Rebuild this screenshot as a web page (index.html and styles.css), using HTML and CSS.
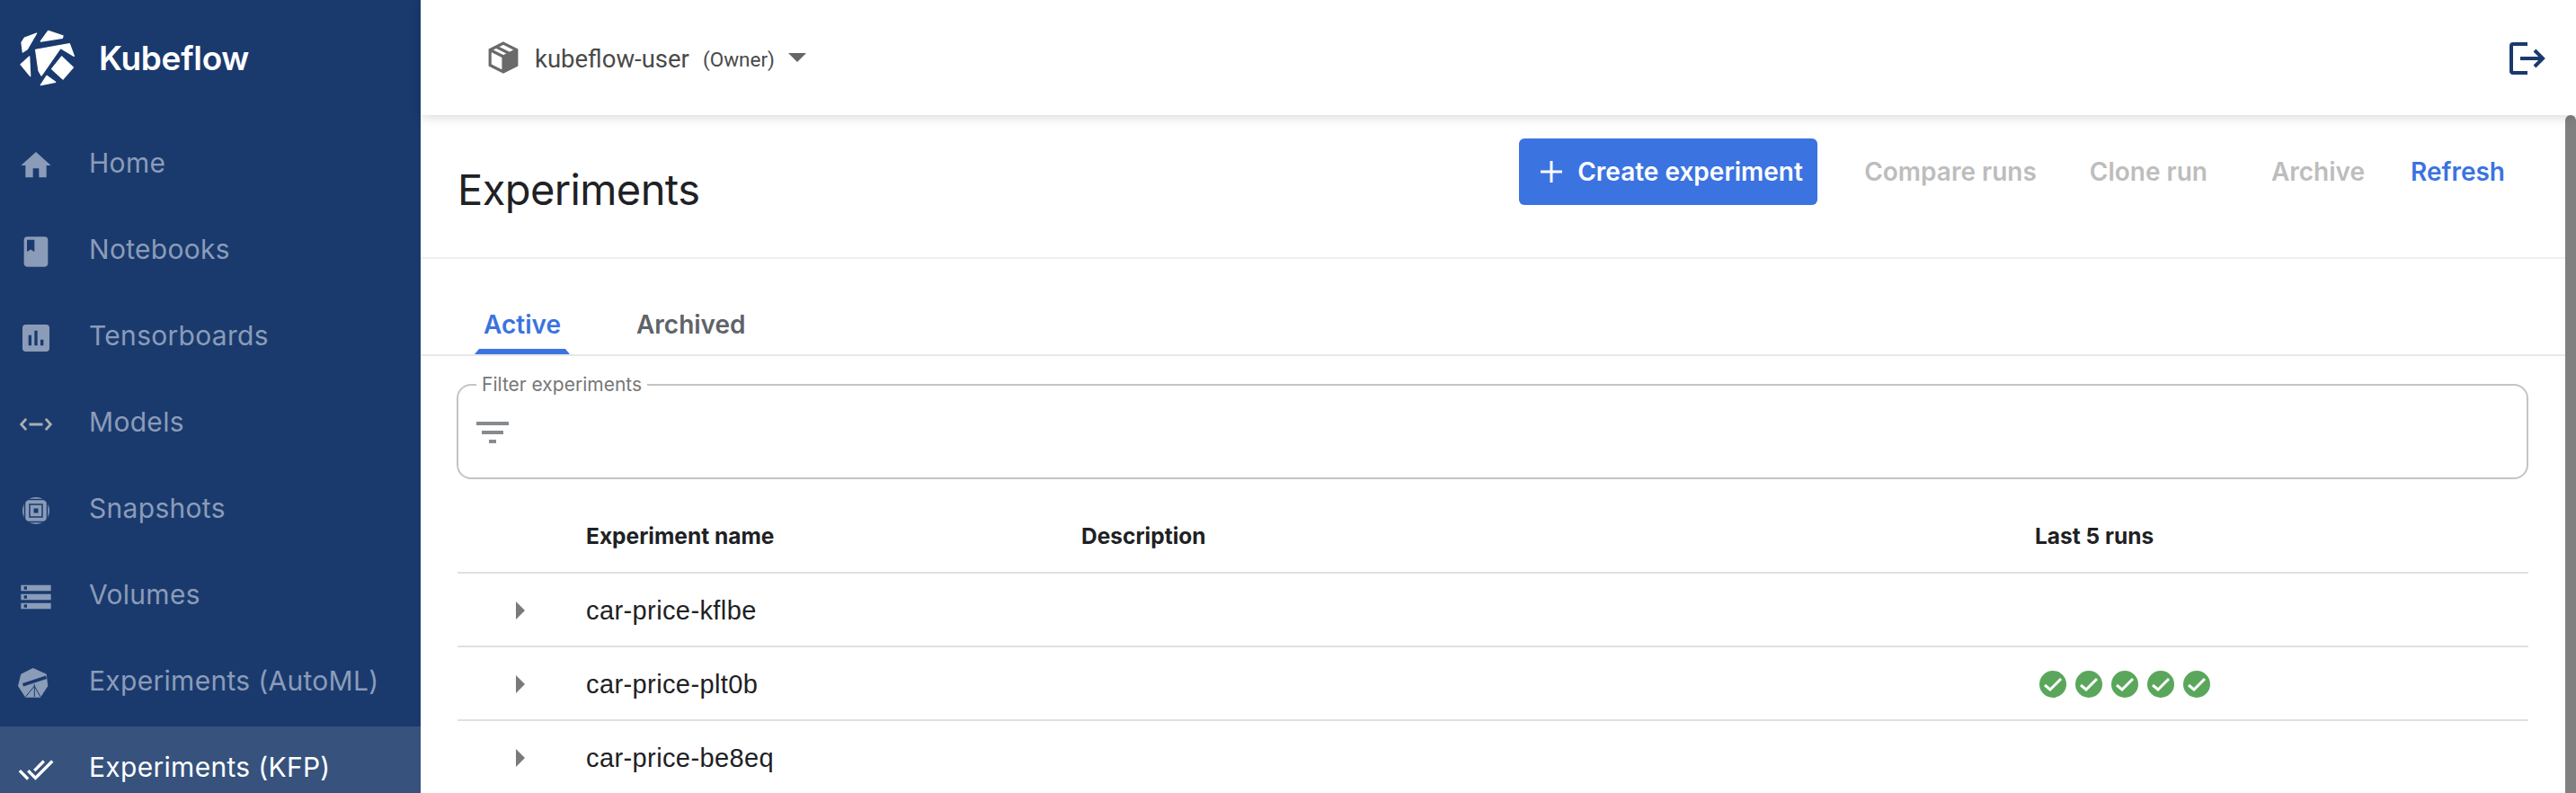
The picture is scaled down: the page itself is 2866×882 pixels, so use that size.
FILE: index.html
```html
<!DOCTYPE html>
<html lang="en">
<head>
    <meta charset="UTF-8">
    <title>Kubeflow - Experiments</title>
    <link rel="stylesheet" href="styles.css">
</head>
<body>
    <aside class="sidebar">
        <div class="brand">
            <svg class="brand-logo" viewBox="0 0 240 270">
                <path d="M42 82 52 66 92 51 61 104 46 114z"/>
                <path d="M106 78 131 43 180 60 178 67z"/>
                <path d="M89 106 202 86 217 127 172 100 108 192 99 176z"/>
                <path d="M176 129 214 165 180 204 143 170z"/>
                <path d="M68 129 71 194 39 155z"/>
                <path d="M126 193 155 214 106 224z"/>
            </svg>
            <span class="brand-name">Kubeflow</span>
        </div>
        <nav class="nav">
            <a class="nav-item">
                <svg class="nav-icon" viewBox="0 0 24 24"><path d="M10 20v-6h4v6h5v-8h3L12 3 2 12h3v8z"/></svg>
                <span>Home</span>
            </a>
            <a class="nav-item">
                <svg class="nav-icon" viewBox="0 0 24 24"><path d="M18 2H6c-1.100 0-2 .9-2 2v16c0 1.100.9 2 2 2h12c1.100 0 2-.9 2-2V4c0-1.100-.9-2-2-2zM6 4h5v8l-2.500-1.500L6 12V4z"/></svg>
                <span>Notebooks</span>
            </a>
            <a class="nav-item">
                <svg class="nav-icon" viewBox="0 0 24 24"><path d="M19 3H5c-1.100 0-2 .9-2 2v14c0 1.100.9 2 2 2h14c1.100 0 2-.9 2-2V5c0-1.100-.9-2-2-2zM9 17H7v-7h2v7zm4 0h-2V7h2v10zm4 0h-2v-4h2v4z"/></svg>
                <span>Tensorboards</span>
            </a>
            <a class="nav-item">
                <svg class="nav-icon icon-models" viewBox="0 0 24 24"><path d="M5.500 8.300 2.200 12l3.300 3.700M18.500 8.300l3.300 3.700-3.300 3.700M7.500 12h9"/></svg>
                <span>Models</span>
            </a>
            <a class="nav-item">
                <svg class="nav-icon icon-snapshots" viewBox="0 0 40 40">
                    <circle cx="20" cy="20" r="15"/>
                    <rect class="ring" x="7.500" y="7.500" width="25" height="25"/>
                    <rect class="ring" x="13" y="13" width="14" height="14"/>
                    <rect class="core" x="17.500" y="17.500" width="5" height="5"/>
                </svg>
                <span>Snapshots</span>
            </a>
            <a class="nav-item">
                <svg class="nav-icon" viewBox="0 0 24 24"><path d="M2 20h20v-4H2v4zm2-3h2v2H4v-2zM2 4v4h20V4H2zm4 3H4V5h2v2zm-4 7h20v-4H2v4zm2-3h2v2H4v-2z"/></svg>
                <span>Volumes</span>
            </a>
            <a class="nav-item">
                <svg class="nav-icon icon-katib" viewBox="0 0 40 40">
                    <path d="M16.700 3 31.700 9.700 33.300 23 25 35.700H8.300L0 23 3.300 9.700z"/>
                    <path class="scope" d="M5 20 31 11.500 32 15 6 23.500z"/>
                    <path class="scope-legs" d="M18.300 21V35M18.300 23 8.500 35M18.300 23 25 35"/>
                </svg>
                <span>Experiments (AutoML)</span>
            </a>
            <a class="nav-item active">
                <svg class="nav-icon icon-done" viewBox="0 0 24 24"><path d="M18 7l-1.410-1.410-6.340 6.340 1.410 1.410L18 7zm4.240-1.410L11.660 16.170 7.480 12l-1.410 1.410L11.660 19l12-12-1.420-1.410zM.41 13.410L6 19l1.410-1.410L1.830 12 .41 13.410z"/></svg>
                <span>Experiments (KFP)</span>
            </a>
        </nav>
    </aside>

    <div class="main">
        <header class="topbar">
            <div class="namespace">
                <svg class="box-icon" viewBox="0 0 32 34">
                    <path fill="none" stroke="#6a6a6a" stroke-width="3" d="M16 2 30 9v16l-14 7-14-7V9zM2 9l14 7 14-7M16 16v16"/>
                    <path fill="#6a6a6a" d="M16 16l14-7v16l-14 7z"/>
                    <path fill="none" stroke="#6a6a6a" stroke-width="3" d="M9 6l13 6.500"/>
                </svg>
                <span class="namespace-name">kubeflow-user</span>
                <span class="namespace-role">(Owner)</span>
                <span class="caret"></span>
            </div>
            <svg class="logout" viewBox="0 0 40 36"><path d="M20 2H4a2 2 0 0 0-2 2v28a2 2 0 0 0 2 2h16M12 18h25M28 9l9 9-9 9"/></svg>
        </header>

        <div class="content">
            <div class="scrollbar"></div>

            <div class="page-head">
                <h1>Experiments</h1>
                <div class="actions">
                    <button class="btn-primary">
                        <svg class="plus" viewBox="0 0 24 24"><path d="M12 0v24M0 12h24"/></svg>
                        Create experiment
                    </button>
                    <button class="btn-text compare">Compare runs</button>
                    <button class="btn-text clone">Clone run</button>
                    <button class="btn-text archive">Archive</button>
                    <button class="btn-text refresh">Refresh</button>
                </div>
            </div>

            <div class="tabs">
                <div class="tab active">Active</div>
                <div class="tab">Archived</div>
            </div>

            <fieldset class="filter">
                <legend>Filter experiments</legend>
                <svg class="filter-icon" viewBox="0 0 36 24"><path d="M0 0h36v4H0zM6 10h24v4H6zM14 20h8v4h-8z"/></svg>
            </fieldset>

            <div class="table">
                <div class="row head">
                    <div class="cell-toggle"></div>
                    <div class="cell-name">Experiment name</div>
                    <div class="cell-desc">Description</div>
                    <div class="cell-runs">Last 5 runs</div>
                </div>
                <div class="row">
                    <div class="cell-toggle"><span class="arrow"></span></div>
                    <div class="cell-name">car-price-kflbe</div>
                    <div class="cell-desc"></div>
                    <div class="cell-runs"></div>
                </div>
                <div class="row">
                    <div class="cell-toggle"><span class="arrow"></span></div>
                    <div class="cell-name">car-price-plt0b</div>
                    <div class="cell-desc"></div>
                    <div class="cell-runs statuses">
                        <svg class="check" viewBox="0 0 30 30"><circle cx="15" cy="15" r="15"/><path d="M6 16l6 5 12-12"/></svg>
                        <svg class="check" viewBox="0 0 30 30"><circle cx="15" cy="15" r="15"/><path d="M6 16l6 5 12-12"/></svg>
                        <svg class="check" viewBox="0 0 30 30"><circle cx="15" cy="15" r="15"/><path d="M6 16l6 5 12-12"/></svg>
                        <svg class="check" viewBox="0 0 30 30"><circle cx="15" cy="15" r="15"/><path d="M6 16l6 5 12-12"/></svg>
                        <svg class="check" viewBox="0 0 30 30"><circle cx="15" cy="15" r="15"/><path d="M6 16l6 5 12-12"/></svg>
                    </div>
                </div>
                <div class="row">
                    <div class="cell-toggle"><span class="arrow"></span></div>
                    <div class="cell-name">car-price-be8eq</div>
                    <div class="cell-desc"></div>
                    <div class="cell-runs"></div>
                </div>
            </div>
        </div>
    </div>
</body>
</html>
```

FILE: styles.css
```css
html, body {
    margin: 0;
    height: 882px;
    overflow: hidden;
}
body {
    display: flex;
    font-family: Inter, "Noto Sans", sans-serif;
    background: #fff;
    color: #202124;
}

/* sidebar */
.sidebar {
    width: 468px;
    flex: none;
    background: #1a3a6e;
    overflow: hidden;
}
.brand {
    height: 128px;
    display: flex;
    align-items: center;
    padding-left: 10px;
    gap: 20px;
    box-sizing: border-box;
}
.brand-logo {
    width: 80px;
    height: 90px;
    margin-top: 2px;
    fill: #fff;
    stroke: #fff;
    stroke-width: 4;
    stroke-linejoin: round;
}
.brand-name {
    color: #fff;
    font-size: 37px;
    font-weight: 600;
    letter-spacing: -0.3px;
}
.nav {
    margin-top: 8px;
}
.nav-item {
    height: 96px;
    display: flex;
    align-items: center;
    color: #8b9cb8;
    font-size: 30px;
    letter-spacing: 0.3px;
    padding-left: 20px;
}
.nav-item span {
    margin-left: 39px;
    margin-bottom: 6px;
}
.nav-icon {
    width: 40px;
    height: 40px;
    flex: none;
    fill: #8b9cb8;
}
.icon-models {
    fill: none;
    stroke: #a9aeb0;
    stroke-width: 1.700;
}
.icon-snapshots .ring {
    fill: none;
    stroke: #1a3a6e;
    stroke-width: 1.500;
}
.icon-snapshots .core {
    fill: #1a3a6e;
}
.icon-katib .scope {
    fill: #1a3a6e;
}
.icon-katib .scope-legs {
    fill: none;
    stroke: #1a3a6e;
    stroke-width: 1;
}
.icon-done {
    fill: #fff;
}
.nav-item.active {
    background: #36527d;
    color: #fff;
}

/* top bar */
.main {
    flex: 1;
    min-width: 0;
    display: flex;
    flex-direction: column;
}
.topbar {
    height: 128px;
    flex: none;
    display: flex;
    align-items: center;
    justify-content: space-between;
    padding: 0 34px 0 75px;
    box-sizing: border-box;
    background: #fff;
    box-shadow: 0 2px 12px rgba(0, 0, 0, 0.16);
    position: relative;
    z-index: 1;
}
.namespace {
    display: flex;
    align-items: center;
    color: #4a4a4a;
}
.box-icon {
    width: 34px;
    height: 36px;
    margin-right: 18px;
}
.namespace-name {
    font-family: Roboto, sans-serif;
    font-size: 27.500px;
    margin-top: 2px;
}
.namespace-role {
    font-family: Roboto, sans-serif;
    font-size: 22.500px;
    margin-left: 15px;
    margin-top: 4px;
}
.caret {
    width: 0;
    height: 0;
    margin-left: 15px;
    border-left: 10px solid transparent;
    border-right: 10px solid transparent;
    border-top: 10px solid #666;
}
.logout {
    width: 40px;
    height: 36px;
    margin-top: 2px;
    fill: none;
    stroke: #1a3a6e;
    stroke-width: 4;
}

/* page */
.content {
    position: relative;
    flex: 1;
    overflow: hidden;
}
.scrollbar {
    position: absolute;
    top: 0;
    right: 0;
    width: 12px;
    height: 100%;
    background: #808080;
    border-radius: 6px 6px 0 0;
}
.page-head {
    height: 158px;
    display: flex;
    justify-content: space-between;
    border-bottom: 2px solid #eeeeee;
    padding-left: 41px;
    margin-right: 12px;
}
h1 {
    margin: 0;
    font-size: 47px;
    font-weight: 400;
    letter-spacing: -0.6px;
    color: #202124;
    line-height: 60px;
    padding-top: 53px;
}
.actions {
    display: flex;
    align-items: flex-start;
    padding-top: 26px;
    padding-right: 67px;
}
button {
    font-family: inherit;
    border: none;
    background: none;
    font-size: 28px;
    font-weight: 600;
    padding: 0;
    cursor: pointer;
}
.btn-primary {
    width: 332px;
    height: 74px;
    margin-right: 52px;
    background: #3b73e0;
    border-radius: 6px;
    color: #fff;
    display: flex;
    align-items: center;
    padding-left: 24px;
    box-sizing: border-box;
    white-space: nowrap;
}
.plus {
    width: 24px;
    height: 24px;
    margin-right: 17px;
    fill: none;
    stroke: #fff;
    stroke-width: 3;
}
.btn-text {
    height: 74px;
    color: #bdbdbd;
    white-space: nowrap;
}
.compare { margin-right: 59px; }
.clone { margin-right: 71px; }
.archive { margin-right: 51px; }
.refresh { color: #3b73e0; }

/* tabs */
.tabs {
    display: flex;
    height: 108px;
    box-sizing: border-box;
    align-items: flex-end;
    border-bottom: 2px solid #e8e8e8;
    margin-right: 12px;
    padding-left: 60px;
    gap: 64px;
}
.tab {
    position: relative;
    font-size: 28px;
    font-weight: 600;
    line-height: 34px;
    color: #5f6368;
    padding: 0 10px 16px;
}
.tab.active {
    color: #3b73e0;
}
.tab.active::after {
    content: "";
    position: absolute;
    left: 0;
    right: 0;
    bottom: 0;
    height: 6px;
    background: #3b73e0;
    clip-path: polygon(5px 0, calc(100% - 5px) 0, 100% 100%, 0 100%);
}

/* filter */
.filter {
    width: 2305px;
    height: 118px;
    box-sizing: border-box;
    margin: 19px 0 0 40px;
    padding: 0 0 0 20px;
    border: 2px solid #c4c4c4;
    border-radius: 16px;
    display: block;
}
.filter legend {
    font-size: 21px;
    line-height: 26px;
    color: #777;
    padding: 0 6px;
    margin-left: 0;
}
.filter-icon {
    display: block;
    margin-top: 28px;
    width: 36px;
    height: 24px;
    fill: #878b90;
}

/* table */
.table {
    margin: 15px 53px 0 41px;
}
.row {
    display: flex;
    align-items: center;
    height: 82px;
    padding-top: 2px;
    border-bottom: 2px solid #e0e0e0;
    box-sizing: border-box;
    font-family: "Liberation Sans", Arial, sans-serif;
    font-size: 29px;
    letter-spacing: 0.4px;
    color: #202124;
}
.row.head {
    font-family: Inter, sans-serif;
    font-size: 24.500px;
    font-weight: 700;
    letter-spacing: 0;
    height: 90px;
    padding-top: 8px;
}
.cell-toggle {
    width: 143px;
    flex: none;
    padding-left: 65px;
    box-sizing: border-box;
}
.cell-name { width: 551px; flex: none; }
.cell-desc { width: 1061px; flex: none; }
.cell-runs { flex: 1; }
.arrow {
    display: block;
    width: 0;
    height: 0;
    border-top: 10px solid transparent;
    border-bottom: 10px solid transparent;
    border-left: 10px solid #7a7a7a;
}
.statuses {
    display: flex;
    gap: 10px;
    padding-left: 5px;
}
.check {
    width: 30px;
    height: 30px;
    fill: #5aa75c;
}
.check path {
    fill: none;
    stroke: #fff;
    stroke-width: 3;
}
```
